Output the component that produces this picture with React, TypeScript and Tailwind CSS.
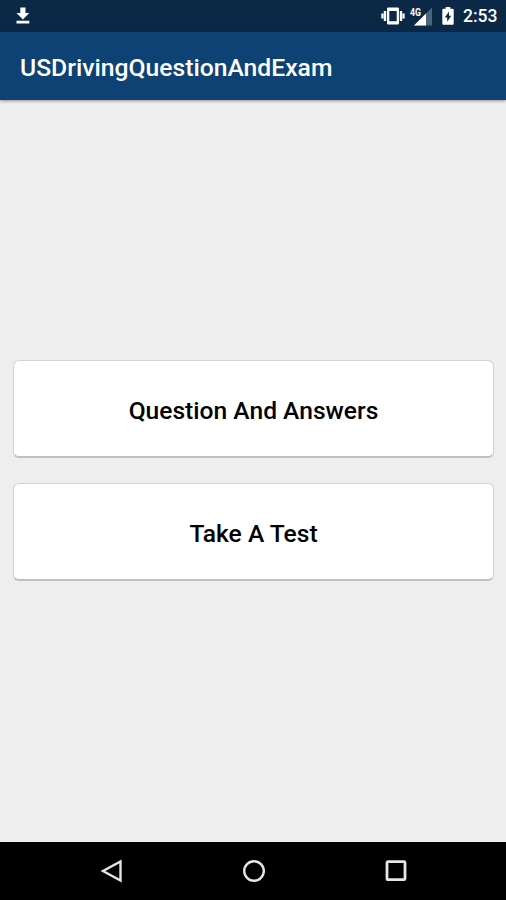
const DownloadIcon = () => (
  <svg width="14" height="18" viewBox="0 0 14 18" fill="#fff">
    <path d="M4.3 0.5h5.2v5.5h3.8L6.9 12.5 0.5 6h3.8zM0.5 13.8h12.8v2.8H0.5z" />
  </svg>
);

const VibrateIcon = () => (
  <svg width="24" height="18" viewBox="0 0 24 18" fill="#fff">
    <path
      fillRule="evenodd"
      d="M7.3 0.5h9.4Q18 0.5 18 1.8v14.4q0 1.3-1.3 1.3H7.3Q6 17.5 6 16.2V1.8Q6 0.5 7.3 0.5zM8.3 4v10.2h7.4V4z"
    />
    <path d="M2.8 4h2.4v10H2.8zM0.3 6.5h2.2v5H0.3zM18.8 4h2.4v10h-2.4zM21.5 6.5h2.2v5h-2.2z" />
  </svg>
);

const SignalIcon = () => (
  <svg width="23" height="19" viewBox="0 0 23 19">
    <path d="M22 0.5v18H4z" fill="#4d647d" />
    <path d="M16 6.5v12H4z" fill="#fff" />
    <path d="M0 0h12v9.5H0z" fill="#0b2947" />
    <text
      x="0"
      y="8.5"
      fill="#fff"
      fontSize="10"
      fontWeight="700"
      textLength="11"
      lengthAdjust="spacingAndGlyphs"
    >
      4G
    </text>
  </svg>
);

const BatteryIcon = () => (
  <svg width="12" height="18" viewBox="0 0 12 18">
    <path
      d="M3.7 0h4.6v1.8h2.2q1.2 0 1.2 1.2v13.5q0 1.2-1.2 1.2h-9q-1.2 0-1.2-1.2V3q0-1.2 1.2-1.2h2.2z"
      fill="#fff"
    />
    <path d="M7 4.5L2.8 10.6h2.4v4.2l4-6.1H7z" fill="#0b2947" />
  </svg>
);

const StatusBar = () => (
  <div className="flex h-8 items-center justify-between bg-[#0b2947] pr-[9px] pl-4 text-white">
    <DownloadIcon />
    <div className="flex items-center">
      <VibrateIcon />
      <div className="ml-[5px]">
        <SignalIcon />
      </div>
      <div className="ml-[9px]">
        <BatteryIcon />
      </div>
      <span className="ml-[9px] w-[34px] pt-px text-[17.5px] leading-none font-medium whitespace-nowrap">
        2:53
      </span>
    </div>
  </div>
);

const MenuButton = ({ label }: { label: string }) => (
  <button className="h-[98px] w-full rounded-md border border-b-2 border-[#d2d2d2] border-b-[#c0c0c0] bg-white pt-[7px] text-[24.6px] font-medium text-black">
    {label}
  </button>
);

const NavigationBar = () => (
  <nav className="flex h-[58px] items-center justify-center gap-[118px] bg-black pl-px">
    <svg width="24" height="24" viewBox="0 0 24 24" fill="none">
      <path d="M20.5 2.5v19L3 12z" stroke="#e6e6e6" strokeWidth="2.4" />
    </svg>
    <svg width="24" height="24" viewBox="0 0 24 24" fill="none">
      <circle cx="12" cy="12" r="9.8" stroke="#e6e6e6" strokeWidth="2.4" />
    </svg>
    <svg width="24" height="24" viewBox="0 0 24 24" fill="none">
      <rect
        x="3"
        y="2.7"
        width="18"
        height="18"
        rx="1"
        stroke="#e6e6e6"
        strokeWidth="2.8"
      />
    </svg>
  </nav>
);

const App = () => {
  return (
    <div className="flex h-[900px] w-[506px] flex-col bg-[#eeeeee] font-['Roboto',sans-serif]">
      <StatusBar />
      <header className="z-10 flex h-[68px] items-center bg-[#0f4274] px-5 pt-[3px] shadow-[0_1px_3px_rgba(0,0,0,0.4)]">
        <h1 className="text-[24.7px] font-medium text-white">
          USDrivingQuestionAndExam
        </h1>
      </header>
      <main className="flex flex-1 flex-col justify-center gap-[25px] pr-[12px] pb-0.5 pl-[13px]">
        <MenuButton label="Question And Answers" />
        <MenuButton label="Take A Test" />
      </main>
      <NavigationBar />
    </div>
  );
};

export default App;
